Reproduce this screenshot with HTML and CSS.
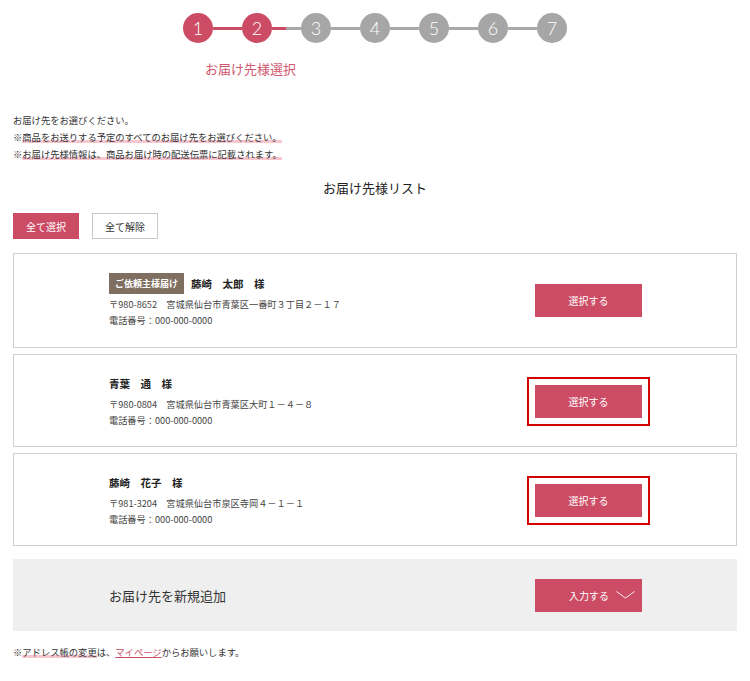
FILE: index.html
```html
<!DOCTYPE html>
<html lang="ja">
<head>
  <meta charset="UTF-8">
  <title>お届け先様選択</title>
  <link rel="stylesheet" href="styles.css">
</head>
<body>

  <!-- ステップ表示 -->
  <div class="steps">
    <div class="step-row">
      <span class="step done">1</span>
      <span class="bar done"></span>
      <span class="step done">2</span>
      <span class="bar half"></span>
      <span class="step">3</span>
      <span class="bar"></span>
      <span class="step">4</span>
      <span class="bar"></span>
      <span class="step">5</span>
      <span class="bar"></span>
      <span class="step">6</span>
      <span class="bar"></span>
      <span class="step">7</span>
    </div>
    <p class="step-label">お届け先様選択</p>
  </div>

  <div class="page">
    <p class="intro">
      お届け先をお選びください。<br>
      ※<span class="mark">商品をお送りする予定のすべてのお届け先をお選びください。</span><br>
      ※<span class="mark">お届け先様情報は、商品お届け時の配送伝票に記載されます。</span>
    </p>

    <h2 class="list-title">お届け先様リスト</h2>

    <div class="bulk">
      <button class="btn-fill">全て選択</button>
      <button class="btn-line">全て解除</button>
    </div>

    <!-- お届け先リスト -->
    <div class="card">
      <div class="addr">
        <div class="name"><span class="badge">ご依頼主様届け</span>藤崎　太郎　様</div>
        <div>〒980-8652　宮城県仙台市青葉区一番町３丁目２－１７</div>
        <div>電話番号：000-000-0000</div>
      </div>
      <button class="btn-select">選択する</button>
    </div>

    <div class="card">
      <div class="addr">
        <div class="name">青葉　通　様</div>
        <div>〒980-0804　宮城県仙台市青葉区大町１－４－８</div>
        <div>電話番号：000-000-0000</div>
      </div>
      <button class="btn-select marked">選択する</button>
    </div>

    <div class="card">
      <div class="addr">
        <div class="name">藤崎　花子　様</div>
        <div>〒981-3204　宮城県仙台市泉区寺岡４－１－１</div>
        <div>電話番号：000-000-0000</div>
      </div>
      <button class="btn-select marked">選択する</button>
    </div>

    <div class="add-box">
      <span class="add-title">お届け先を新規追加</span>
      <button class="btn-select btn-open">入力する
        <svg width="19" height="8" viewBox="0 0 19 8"><path d="M0.5 0.5 L9.5 7 L18.5 0.5" fill="none" stroke="#fff" stroke-width="0.9"/></svg>
      </button>
    </div>

    <p class="note">※<span class="mark">アドレス帳の変更</span>は、<a href="#">マイページ</a>からお願いします。</p>
  </div>

</body>
</html>
```

FILE: styles.css
```css
body {
  margin: 0;
  font-family: "Noto Sans CJK JP", "Noto Sans", sans-serif;
  color: #333;
  background: #fff;
}
button {
  font-family: inherit;
  cursor: pointer;
}

/* ステップ */
.steps {
  width: 384px;
  margin: 13px auto 0;
}
.step-row {
  display: flex;
  align-items: center;
}
.step {
  width: 30px;
  height: 30px;
  border-radius: 50%;
  background: #a6a6a6;
  color: #fff;
  font-family: Lato, "Open Sans", sans-serif;
  font-size: 18px;
  font-weight: 300;
  line-height: 30px;
  text-align: center;
}
.step.done {
  background: #cc4c66;
}
.bar {
  width: 29px;
  height: 3px;
  background: #a9a9a9;
}
.bar.done {
  background: #cc4c66;
}
.bar.half {
  background: linear-gradient(to right, #cc4c66 50%, #a9a9a9 50%);
}
.step-label {
  margin: 17px 0 0 22px;
  font-size: 13px;
  line-height: 18px;
  color: #d0566e;
}

.page {
  padding: 0 13px;
}
.intro {
  margin: 34px 0 0;
  font-size: 9.3px;
  line-height: 17px;
}
.mark {
  background: linear-gradient(transparent 72%, #f7c6cf 72%, #f7c6cf 92%, transparent 92%);
}
.list-title {
  margin: 16px 0 0;
  font-size: 13px;
  font-weight: normal;
  line-height: 18px;
  text-align: center;
  color: #222;
}

.bulk {
  display: flex;
  gap: 13px;
  margin-top: 16px;
}
.btn-fill, .btn-line {
  width: 66px;
  height: 26px;
  font-size: 10px;
  padding: 0;
}
.btn-fill {
  background: #cc4c66;
  color: #fff;
  border: none;
}
.btn-line {
  background: #fff;
  color: #333;
  border: 1px solid #c8c8c8;
}

/* カード */
.card {
  display: flex;
  align-items: center;
  justify-content: space-between;
  border: 1px solid #cfcfcf;
  padding: 19px 94px 18px 95px;
  margin-top: 6px;
}
.bulk + .card {
  margin-top: 14px;
  padding-bottom: 19px;
}
.addr {
  font-size: 9.2px;
  line-height: 16px;
  color: #444;
}
.name {
  display: flex;
  align-items: center;
  min-height: 20px;
  margin-bottom: 2px;
  font-size: 10.5px;
  font-weight: bold;
  color: #222;
}
.badge {
  display: inline-block;
  height: 21px;
  line-height: 21px;
  padding: 0 6px;
  margin-right: 7px;
  background: #7e6f60;
  color: #fff;
  font-size: 9px;
}
.btn-select {
  width: 107px;
  height: 33px;
  padding: 0;
  background: #cc4c66;
  color: #fff;
  border: none;
  font-size: 10px;
}
.marked {
  outline: 2px solid #d40000;
  outline-offset: 6px;
}

.add-box {
  display: flex;
  align-items: center;
  justify-content: space-between;
  height: 72px;
  margin-top: 13px;
  padding: 0 95px 0 96px;
  background: #efefef;
}
.add-title {
  font-size: 13px;
  color: #333;
}
.btn-open {
  display: flex;
  align-items: center;
  gap: 7px;
  padding-left: 34px;
}

.note {
  margin: 13px 0 0;
  font-size: 9.3px;
  line-height: 17px;
}
.note a {
  color: #c9506a;
}
```
